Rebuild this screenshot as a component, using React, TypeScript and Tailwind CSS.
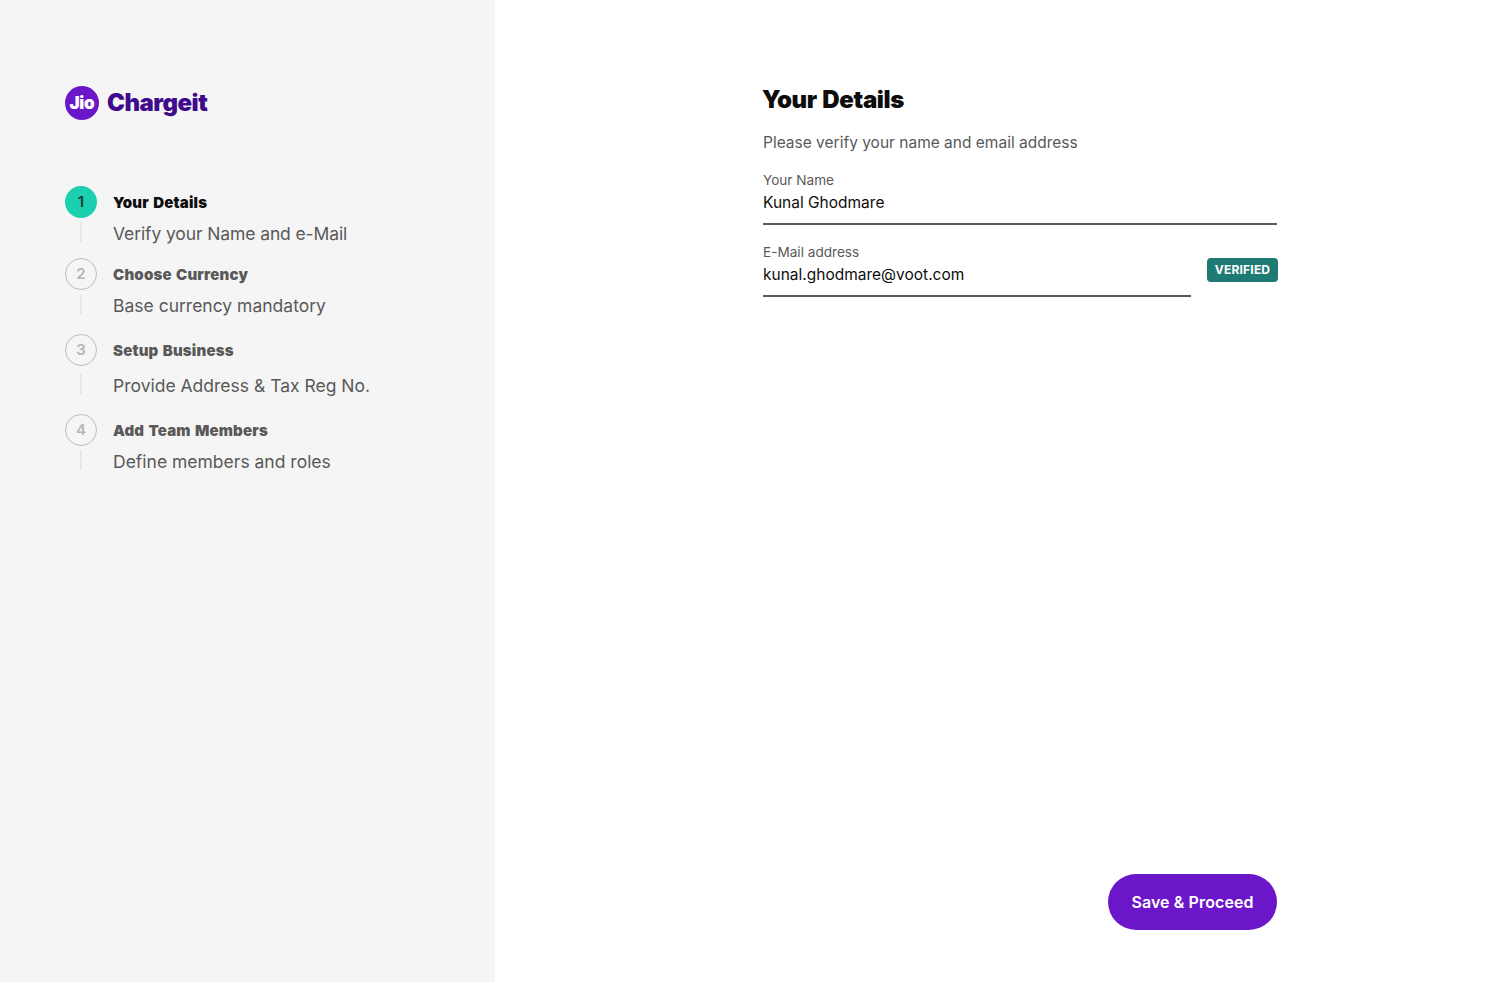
import React from 'react';

const steps = [
  { n: 1, title: 'Your Details', desc: 'Verify your Name and e-Mail', gap: 'mt-0', descGap: 'mt-[4px]', descTrack: 'tracking-[-0.11px]' },
  { n: 2, title: 'Choose Currency', desc: 'Base currency mandatory', gap: 'mt-[12px]', descGap: 'mt-[4px]', descTrack: '' },
  { n: 3, title: 'Setup Business', desc: 'Provide Address & Tax Reg No.', gap: 'mt-[16px]', descGap: 'mt-[8px]', descTrack: '' },
  { n: 4, title: 'Add Team Members', desc: 'Define members and roles', gap: 'mt-[16px]', descGap: 'mt-[4px]', descTrack: '' },
];

const App: React.FC = () => {
  return (
    <div className="flex h-[982px] overflow-hidden bg-white font-['Inter',sans-serif]">
      {/* Sidebar */}
      <aside className="w-[495px] shrink-0 bg-[#f5f5f5] pl-[65px] pt-[86px]">
        <div className="flex items-center gap-2">
          <div className="flex h-[34px] w-[34px] items-center justify-center rounded-full bg-[#6b17c9] text-[17px] font-black leading-none tracking-[-0.3px] text-white">
            Jio
          </div>
          <span className="text-[24px] font-black leading-[34px] tracking-[-0.5px] text-[#3f0a8c]">Chargeit</span>
        </div>

        <div className="mt-[66px]">
          {steps.map((s) => (
            <div key={s.n} className={s.gap}>
              <div className="flex items-center gap-4">
                {s.n === 1 ? (
                  <div className="flex h-8 w-8 items-center justify-center rounded-full bg-[#1ccfae] text-[15px] font-semibold text-[#0f3d38]">
                    {s.n}
                  </div>
                ) : (
                  <div className="flex h-8 w-8 items-center justify-center rounded-full border border-[#bdbdbd] text-[15px] font-semibold text-[#b5b5b5]">
                    {s.n}
                  </div>
                )}
                <span className={s.n === 1 ? 'pt-[3px] text-[15px] font-black tracking-[0.2px] text-[#0d0d0d] [word-spacing:1px]' : 'pt-[3px] text-[15px] font-black tracking-[0.2px] text-[#595959] [word-spacing:1px]'}>
                  {s.title}
                </span>
              </div>
              <div className={`flex items-start ${s.descGap}`}>
                <div className="ml-[15px] h-5 w-[2px] bg-[#e8e8e8]" />
                <span className={`ml-[31px] text-[17.5px] leading-6 text-[#595959] ${s.descTrack}`}>{s.desc}</span>
              </div>
            </div>
          ))}
        </div>
      </aside>

      {/* Main */}
      <main className="flex h-full flex-1 flex-col pb-[52px] pl-[268px] pr-[235px] pt-[84px]">
        <h1 className="ml-[-1px] text-[24px] font-black leading-8 tracking-[-0.35px] text-[#0d0d0d] [word-spacing:1px]">Your Details</h1>
        <p className="mt-[15px] text-[15.5px] leading-6 text-[#595959]">Please verify your name and email address</p>

        <div className="mt-[16px]">
          <label className="block text-[13.6px] leading-[18px] text-[#595959]">Your Name</label>
          <div className="border-b-2 border-[#595959] pb-[8px] pt-[2px] text-[15.5px] leading-6 text-[#0d0d0d]">Kunal Ghodmare</div>
        </div>

        <div className="mt-[18px] flex items-start gap-4">
          <div className="flex-1">
            <label className="block text-[13.6px] leading-[18px] text-[#595959]">E-Mail address</label>
            <div className="border-b-2 border-[#595959] pb-[8px] pt-[2px] text-[15.5px] leading-6 text-[#0d0d0d]">kunal.ghodmare@voot.com</div>
          </div>
          <span className="mr-[-1px] mt-[15px] flex h-6 w-[71px] items-center justify-center rounded bg-[#1e7b74] text-[12px] font-bold tracking-[0.2px] text-white">
            VERIFIED
          </span>
        </div>

        <div className="mt-auto flex justify-end">
          <button className="h-14 w-[169px] rounded-full bg-[#6b17c9] text-[16px] font-semibold tracking-[0.1px] text-white">Save &amp; Proceed</button>
        </div>
      </main>
    </div>
  );
};

export default App;
